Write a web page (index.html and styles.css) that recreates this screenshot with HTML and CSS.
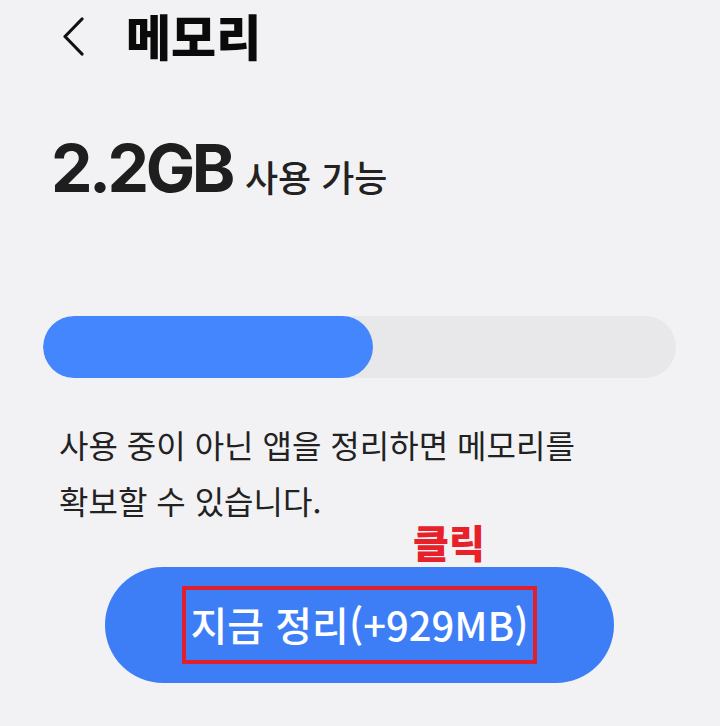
FILE: index.html
```html
<!DOCTYPE html>
<html lang="ko">
    <head>
        <meta charset="UTF-8">
        <title>메모리</title>
        <link rel="stylesheet" href="styles.css">
    </head>
    <body>
        <div class="container">
            <div class="header">
                <svg class="back" width="24" height="40" viewBox="0 0 24 40">
                    <polyline points="20,3 3,20.5 20,38" fill="none" stroke="#111" stroke-width="3.2" stroke-linecap="round" stroke-linejoin="round"/>
                </svg>
                <h1 class="title">메모리</h1>
            </div>

            <div class="summary">
                <span class="amount">2.2GB</span>
                <span class="label">사용 가능</span>
            </div>

            <div class="bar">
                <div class="fill"></div>
            </div>

            <p class="desc">사용 중이 아닌 앱을 정리하면 메모리를<br>확보할 수 있습니다.</p>

            <div class="hint">클릭</div>

            <div class="button">
                <span class="button-text">지금 정리(+929MB)</span>
            </div>
        </div>
    </body>
</html>
```

FILE: styles.css
```css
* {
    margin: 0;
    padding: 0;
    box-sizing: border-box;
}

html, body {
    width: 100%;
    height: 100%;
}

body {
    background-color: #f2f2f4;
    font-family: "Noto Sans CJK KR", "Noto Sans", sans-serif;
    color: #222;
}

.container {
    width: 720px;
    height: 726px;
    overflow: hidden;
}

.header {
    display: flex;
    align-items: center;
    height: 74px;
    padding-left: 62px;
}

.back {
    display: block;
    margin-top: -2px;
}

.title {
    margin-left: 40px;
    font-size: 49px;
    font-weight: 900;
    color: #0a0a0a;
    line-height: 1;
    margin-top: -6px;
}

.summary {
    display: flex;
    align-items: baseline;
    padding-left: 51px;
    margin-top: 54px;
    height: 80px;
}

.amount {
    font-family: Inter, "Noto Sans", sans-serif;
    font-size: 66px;
    font-weight: 700;
    letter-spacing: -3.5px;
    color: #1e1e1e;
}

.label {
    margin-left: 13px;
    font-size: 36px;
    font-weight: 500;
    color: #222;
}

.bar {
    margin: 108px 44px 0 43px;
    height: 62px;
    border-radius: 31px;
    background-color: #e8e8ea;
    overflow: hidden;
}

.fill {
    width: 330px;
    height: 100%;
    border-radius: 31px;
    background-color: #4486fe;
}

.desc {
    margin-top: 38px;
    padding-left: 59px;
    font-size: 32px;
    line-height: 56px;
    color: #222;
}

.hint {
    padding-left: 413px;
    margin-top: -10px;
    font-size: 39px;
    font-weight: 900;
    line-height: 46px;
    color: #e8202a;
}

.button {
    display: flex;
    align-items: center;
    justify-content: center;
    width: 509px;
    height: 116px;
    margin: 3px 0 0 105px;
    border-radius: 58px;
    background-color: #3d7ef7;
}

.button-text {
    display: block;
    padding: 6px 5px 8px 5px;
    border: 4px solid #e21f2c;
    font-size: 40px;
    font-weight: 500;
    line-height: 1.4;
    color: #fff;
}
```
